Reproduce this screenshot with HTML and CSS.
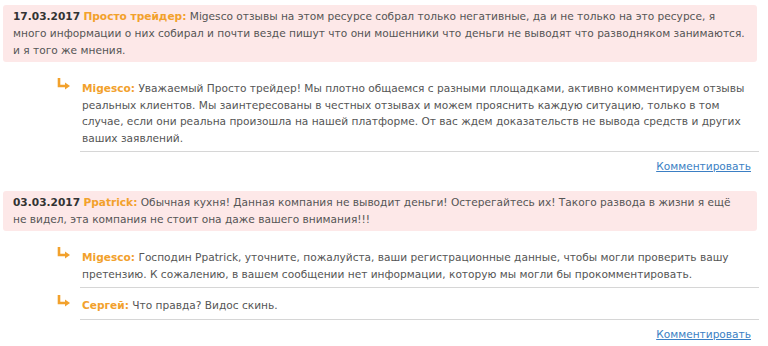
FILE: index.html
```html
<!DOCTYPE html>
<html lang="ru">
<head>
  <meta charset="UTF-8" />
  <title>Отзывы</title>
  <link rel="stylesheet" href="styles.css">
</head>
<body>

  <!-- Отзыв 1 -->
  <div class="review">
    <div class="review-main">
      <span class="date">17.03.2017</span>
      <span class="author">Просто трейдер:</span>
      Migesco отзывы на этом ресурсе собрал только негативные, да и не только на это ресурсе, я много информации о них собирал и почти везде пишут что они мошенники что деньги не выводят что разводняком занимаются. и я того же мнения.
    </div>
    <div class="answers">
      <div class="answer">
        <svg class="arrow" width="14" height="12" viewBox="0 0 14 12"><path d="M2 0v8h7" fill="none" stroke="#f2a12c" stroke-width="2.6"/><path d="M8 4.5l5 3.5-5 3.5z" fill="#f2a12c"/></svg>
        <p><span class="author">Migesco:</span> Уважаемый Просто трейдер! Мы плотно общаемся с разными площадками, активно комментируем отзывы реальных клиентов. Мы заинтересованы в честных отзывах и можем прояснить каждую ситуацию, только в том случае, если они реальна произошла на нашей платформе. От вас ждем доказательств не вывода средств и других ваших заявлений.</p>
      </div>
    </div>
    <div class="review-foot"><a href="#">Комментировать</a></div>
  </div>

  <!-- Отзыв 2 -->
  <div class="review">
    <div class="review-main">
      <span class="date">03.03.2017</span>
      <span class="author">Ppatrick:</span>
      Обычная кухня! Данная компания не выводит деньги! Остерегайтесь их! Такого развода в жизни я ещё не видел, эта компания не стоит она даже вашего внимания!!!
    </div>
    <div class="answers">
      <div class="answer">
        <svg class="arrow" width="14" height="12" viewBox="0 0 14 12"><path d="M2 0v8h7" fill="none" stroke="#f2a12c" stroke-width="2.6"/><path d="M8 4.5l5 3.5-5 3.5z" fill="#f2a12c"/></svg>
        <p><span class="author">Migesco:</span> Господин Ppatrick, уточните, пожалуйста, ваши регистрационные данные, чтобы могли проверить вашу претензию. К сожалению, в вашем сообщении нет информации, которую мы могли бы прокомментировать.</p>
      </div>
      <div class="answer">
        <svg class="arrow" width="14" height="12" viewBox="0 0 14 12"><path d="M2 0v8h7" fill="none" stroke="#f2a12c" stroke-width="2.6"/><path d="M8 4.5l5 3.5-5 3.5z" fill="#f2a12c"/></svg>
        <p><span class="author">Сергей:</span> Что правда? Видос скинь.</p>
      </div>
    </div>
    <div class="review-foot"><a href="#">Комментировать</a></div>
  </div>

</body>
</html>
```

FILE: styles.css
```css
body {
  margin: 0;
  padding: 5px 9px 0 3px;
  font-family: "DejaVu Sans", Verdana, sans-serif;
  font-size: 10.6px;
  line-height: 17px;
  color: #555;
  background: #fff;
}

.review-main {
  background: #fde8e8;
  border-radius: 3px;
  margin-right: 2px;
  padding: 3px 10px;
}

.date {
  font-weight: bold;
  color: #333;
}

.author {
  font-weight: bold;
  color: #f2a12c;
}

.answers {
  padding: 18px 0 0 54px;
  line-height: 16.5px;
}

.answer {
  display: flex;
  gap: 9px;
}

.arrow {
  flex-shrink: 0;
  margin-top: -2px;
}

.answer p {
  flex: 1;
  margin: 0 0 9px;
  padding: 0 0 5px 2px;
  border-bottom: 1px solid #d6d6d6;
}

.answer:last-child p {
  margin-bottom: 0;
}

.review-foot {
  text-align: right;
  padding: 6px 8px 16px 0;
}

.review-foot a {
  color: #3b7fc4;
  text-decoration: underline;
}
```
